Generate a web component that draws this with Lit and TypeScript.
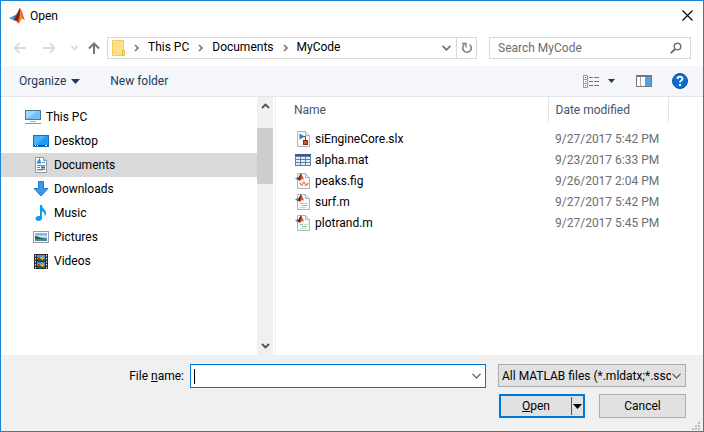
import { LitElement, html, css, svg, TemplateResult } from "lit";
import { customElement, state } from "lit/decorators.js";
import { classMap } from "lit/directives/class-map.js";

type Art = TemplateResult;

const icon = (w: number, h: number, art: Art, cls = "") =>
  html`<svg class=${cls} width=${w} height=${h} viewBox="0 0 ${w} ${h}" aria-hidden="true">${art}</svg>`;

const chevronRight = icon(5, 8, svg`<path d="M1 1L4 4L1 7" fill="none" stroke="#777" stroke-width="1.7"/>`);
const chevronDown = (color: string, weight = 1.2, w = 9) =>
  icon(w, 6, svg`<path d="M.5 .8L${w / 2} 4.8L${w - 0.5} .8" fill="none" stroke=${color} stroke-width=${weight}/>`);
const triangle = (color: string) => icon(9, 5, svg`<path d="M0 0H9L4.5 5z" fill=${color}/>`);

const matlab = svg`
  <path d="M0 10L5.5 7.5L8 10L5 12.5z" fill="#4a9ad0"/>
  <path d="M5.5 7.5C8 7 9 2.500 11 1L8.500 9.500L7.500 12L5 12.500z" fill="#355f8d"/>
  <path d="M11 0C9 3 8.500 8 5 12.500C7 12 8 13.500 9 15.500C11 15 12 11 13 10.500C14 10.500 15 12 16 12.500C14 8 13 2 11 0z" fill="#d8541c"/>
  <path d="M11 0C9 3 8.500 8 5 12.500C7 12 8 12 9 13C10 9 11 5 11 0z" fill="#7a1f18"/>
  <path d="M11 1C12 5 11.500 10 9.500 14C11 13 12 10.500 13 10.500C12.800 7 12 3 11 1z" fill="#f79a3a"/>`;

const page = svg`
  <path d="M2.500 .5H10.500L14.500 4.500V15.500H2.500z" fill="#f7fafc" stroke="#a9b4bf"/>
  <path d="M10.500 .5V4.500H14.500" fill="#e3e9ee" stroke="#a9b4bf"/>`;

const badge = svg`
  <path d="M0 5.500L3 4L4 6L2.500 7z" fill="#3b8fc9"/>
  <path d="M6 0C5 2 4 4 2.500 6.500L5 8L7 6L9 6.500C8 4 7 1.500 6 0z" fill="#d8541c"/>
  <path d="M6 0C5 2 4 4 2.500 6.500L4.500 7C5.500 5 6 2 6 0z" fill="#43202a"/>`;

const places: { name: string; root?: boolean; art: Art }[] = [
  {
    name: "This PC",
    root: true,
    art: svg`<rect x=".5" y="1.500" width="15" height="9" fill="#6cc4fb" stroke="#4e7890"/>
      <path d="M1 10V2H13z" fill="#9bdafe"/><path d="M5 12h6v1H5z" fill="#9fb4c2"/>
      <path d="M0 14.500h16" stroke="#8298a8"/>`,
  },
  {
    name: "Desktop",
    art: svg`<rect x=".5" y="2.500" width="15" height="11" fill="#1c9cf3" stroke="#0f72bd"/>
      <path d="M1 3h12L3 12H1z" fill="#43b2fb"/><path d="M1 12.500h14" stroke="#123f66"/>
      <path d="M2 12.500h1M4 12.500h1M12 12.500h2" stroke="#fff"/>`,
  },
  {
    name: "Documents",
    art: svg`<path d="M2.500 .5H10.500L13.500 3.500V15.500H2.500z" fill="#fff" stroke="#8f979e"/>
      <path d="M10.500 .5V3.500H13.500" fill="#ddd" stroke="#8f979e"/>
      <path d="M4 6.500L6.500 2.500L7.500 6.500M5 5.500H7" fill="none" stroke="#2a82c6" stroke-width="1.300"/>
      <path d="M9 5.500h3M4 8.500h8M4 10.500h3M4 12.500h8" stroke="#3d92cf"/>
      <path d="M8 9.500h4v2H8z" fill="#3b6a8c"/><path d="M4 13.500h6" stroke="#b3c9da"/>`,
  },
  {
    name: "Downloads",
    art: svg`<path d="M5.500 .5H10.500V7.500H15L8 15L1 7.500H5.500z" fill="#3d97e4" stroke="#2a7cc6"/>`,
  },
  {
    name: "Music",
    art: svg`<path d="M7 0H9C9 4 13 4.500 13 8C13 9.500 12.500 10.500 11.500 11C12 8 10.500 6.500 9 6.200V13C9 15 7.500 16 5.500 16C3.500 16 2.500 15 2.500 13.500C2.500 12 4 11 5.500 11H7z" fill="#0c9bf5"/>`,
  },
  {
    name: "Pictures",
    art: svg`<rect x=".5" y="2.500" width="15" height="11" fill="#fff" stroke="#9a9a9a"/>
      <path d="M2 4h12v8H2z" fill="#7bbaf0"/><path d="M2 6.500h12v2H2z" fill="#cfe6f5"/>
      <path d="M2 7C5 7 7 9.500 14 9.500V10.500H2z" fill="#2c5a50"/><path d="M2 10h12v2H2z" fill="#4a87a8"/>`,
  },
  {
    name: "Videos",
    art: svg`<rect x="1" y="1" width="14" height="15" fill="#2b2b2b"/>
      <path d="M2.500 2v14M13.500 2v14" stroke="#e8e8e8" stroke-dasharray="1.500 1.500"/>
      <path d="M4 2h8v6H4zM4 9h8v6H4z" fill="#4b8fe0"/>
      <path d="M4 6h8v2H4zM4 13h8v2H4z" fill="#2c5b2f"/>
      <path d="M7 5l3-2 1 3-2 1zM7 12l3-2 1 3-2 1z" fill="#f2b01e"/>
      <path d="M5 4h2v2H5zM5 11h2v2H5z" fill="#c8372c"/>`,
  },
];

const scriptArt = svg`${page}<path d="M5 9.500h3M7 11.500h5" stroke="#8cc59a"/><path d="M9 9.500h4M5 13.500h6" stroke="#c4dccb"/>${badge}`;

const files: { name: string; date: string; art: Art }[] = [
  {
    name: "siEngineCore.slx",
    date: "9/27/2017 5:42 PM",
    art: svg`${page}<path d="M4.500 2.500L9.500 5.500L4.500 8.500z" fill="#2d7db8"/>
      <path d="M8.500 5.500H10.500V9" fill="none" stroke="#445"/>
      <rect x="8.500" y="9.500" width="4" height="4" fill="#d9512c" stroke="#8f2813"/>`,
  },
  {
    name: "alpha.mat",
    date: "9/23/2017 6:33 PM",
    art: svg`<rect x="0" y="2" width="16" height="12" fill="#5d7cb0"/>
      <path d="M0 2h16v2H0z" fill="#3b5a96"/>
      <path d="M1 5h4v2H1zM6 5h4v2H6zM11 5h4v2h-4zM1 8h4v2H1zM6 8h4v2H6zM11 8h4v2h-4zM1 11h4v2H1zM6 11h4v2H6zM11 11h4v2h-4z" fill="#e6eef9"/>`,
  },
  {
    name: "peaks.fig",
    date: "9/26/2017 2:04 PM",
    art: svg`${page}<path d="M4.500 10L7 12L9 9L11 12.500L13.500 10" fill="none" stroke="#e9853c" stroke-width="1.200"/>${badge}`,
  },
  { name: "surf.m", date: "9/27/2017 5:42 PM", art: scriptArt },
  { name: "plotrand.m", date: "9/27/2017 5:45 PM", art: scriptArt },
];

@customElement("app-root")
export class AppRoot extends LitElement {
  @state() private place = "Documents";

  static styles = css`
    :host {
      display: block;
      font: 12px/16px Roboto, "Open Sans", sans-serif;
      color: #000;
    }
    * { box-sizing: border-box; }
    svg { display: block; flex: none; }
    button, input, select { font: inherit; color: inherit; margin: 0; padding: 0; border: 0; background: none; border-radius: 0; outline: 0; }
    .dialog { display: flex; flex-direction: column; min-height: 100vh; border: 1px solid #1883d7; background: #fff; }
    .title { display: flex; align-items: center; gap: 5px; height: 30px; padding: 0 10px 1px 8px; }
    .title h1 { flex: 1; margin: 0; font: inherit; }
    .nav { display: flex; align-items: center; height: 35px; padding: 0 12px 1px; }
    .arrows { display: flex; align-items: center; width: 94px; }
    .back { margin-right: 17px; }
    .forward { margin-right: 15px; }
    .up { margin-left: 10px; }
    .address { display: flex; align-items: center; flex: 1; height: 22px; border: 1px solid #d9d9d9; padding-left: 4px; }
    .crumbs { display: flex; align-items: center; flex: 1; gap: 9px; padding-left: 8px; }
    .crumbs button { white-space: nowrap; margin-bottom: 2px; }
    .drop { padding: 0 5px; }
    .refresh { display: grid; place-items: center; width: 20px; height: 20px; border-left: 1px solid #d9d9d9; }
    .search { display: flex; align-items: center; width: 202px; height: 22px; margin-left: 12px; border: 1px solid #d9d9d9; padding: 0 8px; }
    .search input { flex: 1; min-width: 0; color: #6d6d6d; }
    .search input::placeholder { color: #6d6d6d; opacity: 1; }
    .tools { display: flex; align-items: center; height: 31px; padding: 0 15px 0 18px; background: #f4f6f9; border-bottom: 1px solid #e5e7ea; color: #1e395b; }
    .organize { display: flex; align-items: center; gap: 5px; margin-right: 30px; }
    .new { flex: 1; text-align: left; }
    .view { margin-right: 9px; }
    .preview { margin: 0 20px 0 21px; }
    .body { display: flex; flex: 1; }
    .side { display: flex; width: 275px; border-right: 1px solid #f0f0f0; padding-right: 2px; }
    .tree { flex: 1; margin: 0; padding: 8px 0 0; list-style: none; }
    .tree button { display: flex; align-items: center; gap: 5px; width: 100%; height: 24px; padding-left: 32px; text-align: left; }
    .tree .root { padding-left: 24px; }
    .tree .on { background: #d9d9d9; }
    .scroll { display: flex; flex-direction: column; align-items: center; width: 16px; background: #f0f0f0; padding: 6px 0 6px; }
    .thumb { width: 16px; height: 56px; margin: 19px 0 auto; background: #cdcdcd; }
    .files { flex: 1; min-width: 0; }
    table { width: 100%; border-collapse: collapse; table-layout: fixed; }
    th, td { padding: 0; text-align: left; font-weight: 400; white-space: nowrap; }
    th { height: 26px; color: #44546f; border-right: 1px solid #e5e5e5; }
    th:last-child { border-right: 0; }
    .date { width: 120px; }
    .rest { width: 35px; }
    th.first { padding-left: 18px; }
    th.date { padding-left: 7px; }
    tbody::before { content: ""; display: block; height: 5px; }
    td { height: 21px; color: #6d6d6d; }
    td.when { padding-left: 7px; }
    .file { display: flex; align-items: center; gap: 4px; padding-left: 19px; color: #000; }
    .footer { display: grid; grid-template-columns: 183px 1fr 188px; gap: 6px 0; padding: 9px 17px 4px 0; background: #f0f0f0; }
    .label { text-align: right; line-height: 24px; }
    .combo { display: flex; align-items: center; height: 24px; margin: 0 12px 0 6px; border: 1px solid #0078d7; background: #fff; padding: 0 4px 0 3px; }
    .combo input { flex: 1; min-width: 0; height: 20px; }
    .caret { width: 1px; height: 15px; background: #000; }
    .type { display: grid; align-items: center; height: 23px; border: 1px solid #adadad; background: #e1e1e1; }
    .type > * { grid-area: 1 / 1; }
    .type svg { justify-self: end; margin-right: 4px; pointer-events: none; }
    .type select { width: 100%; height: 21px; padding: 0 14px 0 3px; appearance: none; overflow: hidden; }
    .actions { grid-column: 3; display: flex; gap: 14px; padding-left: 1px; height: 24px; }
    .split { display: flex; align-items: center; width: 86px; border: 2px solid #0078d7; background: #e1e1e1; }
    .open { flex: 1; }
    .more { display: grid; place-items: center; width: 12px; height: 18px; border-left: 1px solid #555; }
    .cancel { flex: 1; border: 1px solid #adadad; background: #e1e1e1; }
    .grip { display: flex; justify-content: flex-end; padding: 0 3px 1px 0; background: #f0f0f0; }
  `;

  render() {
    return html`
      <main class="dialog">
        <header class="title">
          ${icon(16, 16, matlab)}
          <h1>Open</h1>
          <button aria-label="Close">${icon(11, 11, svg`<path d="M.5 .5L10.500 10.500M10.500 .5L.5 10.500" stroke="#000" stroke-width="1.100"/>`)}</button>
        </header>

        <div class="nav">
          <div class="arrows">
            <button class="back" aria-label="Back">${icon(13, 12, svg`<path d="M13 6H1.500M6.500 1L1.500 6L6.500 11" fill="none" stroke="#dadada" stroke-width="1.800"/>`)}</button>
            <button class="forward" aria-label="Forward">${icon(13, 12, svg`<path d="M0 6H11.500M6.500 1L11.500 6L6.500 11" fill="none" stroke="#dadada" stroke-width="1.800"/>`)}</button>
            <button aria-label="Recent locations">${chevronDown("#d6d6d6", 1.5, 7)}</button>
            <button class="up" aria-label="Up">${icon(12, 12, svg`<path d="M6 12V1.500M1 6.500L6 1.500L11 6.500" fill="none" stroke="#757575" stroke-width="2"/>`)}</button>
          </div>
          <div class="address">
            ${icon(14, 17, svg`<path d="M.5 .5H11.500V15.500H.5z" fill="#ffe08a" stroke="#eecb5c"/><path d="M10.500 10.500H12.500V15.500H10.500z" fill="#ffe9a6" stroke="#e5b93c"/>`)}
            <nav class="crumbs" aria-label="Path">
              ${["This PC", "Documents", "MyCode"].map((c) => html`${chevronRight}<button>${c}</button>`)}
            </nav>
            <button class="drop" aria-label="Previous locations">${chevronDown("#707070", 1.8)}</button>
            <button class="refresh" aria-label="Refresh">${icon(12, 12, svg`<path d="M3.500 2.500A4.300 4.300 0 1 0 8.500 2.500" fill="none" stroke="#7a7a7a" stroke-width="1.500"/><path d="M1 1.500H5V5.500" fill="none" stroke="#7a7a7a" stroke-width="1.300"/>`)}</button>
          </div>
          <label class="search">
            <input type="text" aria-label="Search MyCode" placeholder="Search MyCode" />
            ${icon(12, 12, svg`<circle cx="7.500" cy="4.500" r="3.300" fill="none" stroke="#757575" stroke-width="1.500"/><path d="M5 7L.8 11.200" stroke="#757575" stroke-width="2"/>`)}
          </label>
        </div>

        <div class="tools">
          <button class="organize">Organize ${triangle("#1e395b")}</button>
          <button class="new">New folder</button>
          <button class="view" aria-label="Change view">${icon(16, 13, svg`<path d="M.5 .5H4.500V12.500H.5zM.5 4.500H4.500M.5 8.500H4.500" fill="#fff" stroke="#999"/><path d="M2 2.500h1" stroke="#333"/><path d="M2 6.500h1" stroke="#2a78c8"/><path d="M2 10.500h1" stroke="#c83a2a"/><path d="M6 2.500h4M11 2.500h5M6 6.500h4M11 6.500h5M6 10.500h4M11 10.500h5" stroke="#777"/>`)}</button>
          <button aria-label="More views">${icon(7, 4, svg`<path d="M0 0H7L3.500 4z" fill="#1e395b"/>`)}</button>
          <button class="preview" aria-label="Preview pane">${icon(16, 12, svg`<rect x=".5" y=".5" width="15" height="11" fill="#fff" stroke="#777"/><path d="M0 1h16" stroke="#777" stroke-width="2"/><path d="M4.500 2V11" stroke="#aaa"/><path d="M9 2h6v9H9z" fill="#4ba3e8"/>`)}</button>
          <button aria-label="Help">
            <svg width="16" height="16" viewBox="0 0 16 16" aria-hidden="true">
              <circle cx="8" cy="8" r="7.500" fill="#0a6fd0" stroke="#0a4f9c"/>
              <path d="M5.500 6C5.500 2.900 10.500 2.900 10.500 5.800C10.500 7.500 8 7.500 8 9.500" fill="none" stroke="#fff" stroke-width="1.800"/>
              <path d="M7 11h2v2H7z" fill="#fff"/>
            </svg>
          </button>
        </div>

        <div class="body">
          <div class="side">
            <ul class="tree">
              ${places.map(
                (p) => html`<li><button class=${classMap({ root: !!p.root, on: p.name === this.place })} @click=${() => (this.place = p.name)}>
                  ${icon(16, 16, p.art)}${p.name}
                </button></li>`
              )}
            </ul>
            <div class="scroll">
              ${icon(9, 6, svg`<path d="M1 5L4.500 1.500L8 5" fill="none" stroke="#505050" stroke-width="1.800"/>`)}
              <div class="thumb"></div>
              ${icon(9, 6, svg`<path d="M1 1L4.500 4.500L8 1" fill="none" stroke="#505050" stroke-width="1.800"/>`)}
            </div>
          </div>
          <div class="files">
            <table>
              <thead>
                <tr><th class="first">Name</th><th class="date">Date modified</th><th class="rest"></th></tr>
              </thead>
              <tbody>
                ${files.map(
                  (f) => html`<tr><td><div class="file">${icon(16, 16, f.art)}${f.name}</div></td><td class="when">${f.date}</td><td></td></tr>`
                )}
              </tbody>
            </table>
          </div>
        </div>

        <div class="footer">
          <label class="label" for="name">File <u>n</u>ame:</label>
          <div class="combo">
            <span class="caret"></span>
            <input id="name" type="text" />
            <button aria-label="Recent names">${chevronDown("#555")}</button>
          </div>
          <div class="type">
            <select aria-label="File type"><option>All MATLAB files (*.mldatx;*.ssc</option></select>
            ${chevronDown("#555")}
          </div>
          <div class="actions">
            <div class="split">
              <button class="open"><u>O</u>pen</button>
              <button class="more" aria-label="Open options">${triangle("#000")}</button>
            </div>
            <button class="cancel">Cancel</button>
          </div>
        </div>
        <div class="grip">
          ${icon(8, 8, svg`<path d="M6 0h2v2H6zM3 3h2v2H3zM6 3h2v2H6zM0 6h2v2H0zM3 6h2v2H3zM6 6h2v2H6z" fill="#bdbdbd"/>`)}
        </div>
      </main>
    `;
  }
}
